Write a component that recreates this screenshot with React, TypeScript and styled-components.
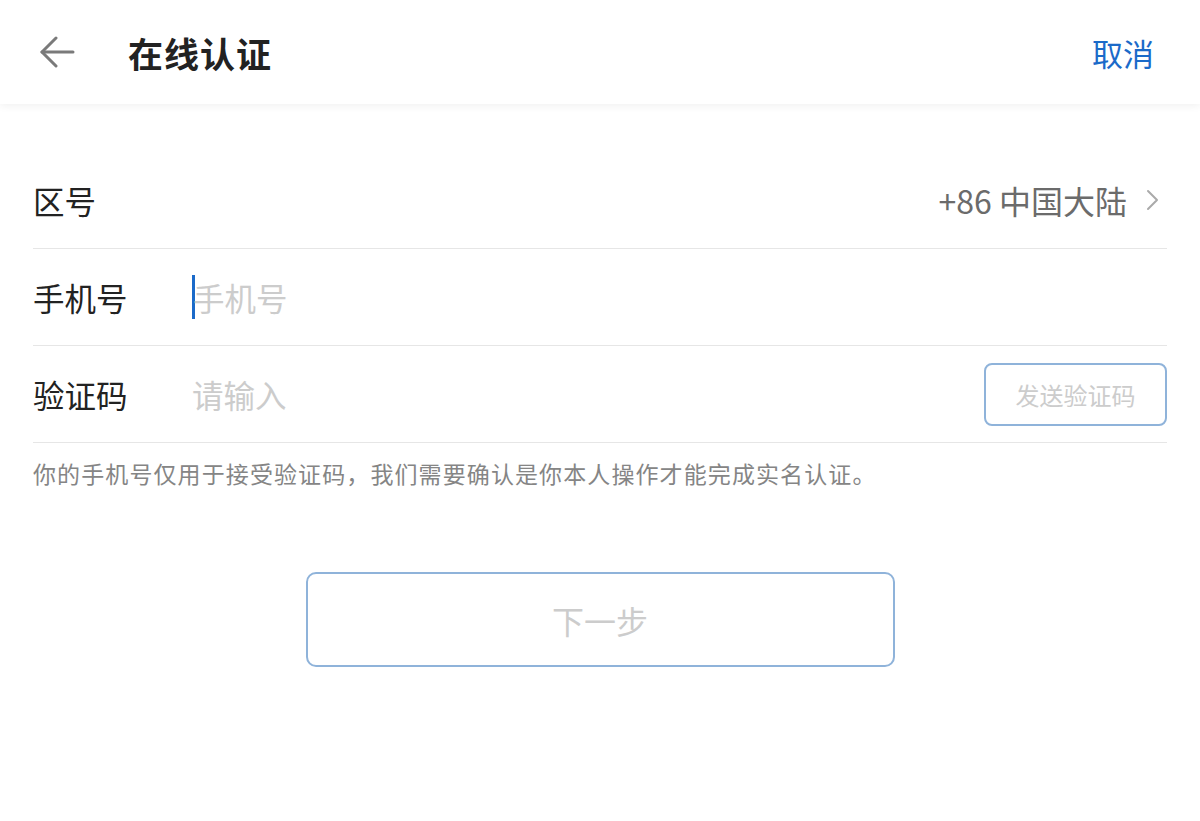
import styled, { createGlobalStyle } from "styled-components";

const GlobalStyle = createGlobalStyle`
  html, body {
    margin: 0;
    padding: 0;
    background: #ffffff;
    font-family: "Noto Sans CJK SC", "Noto Sans", sans-serif;
  }
`;

const Page = styled.div`
  width: 1200px;
  height: 821px;
  background: #ffffff;
  overflow: hidden;
`;

const Header = styled.header`
  height: 104px;
  display: flex;
  align-items: center;
  padding: 0 46px 0 38px;
  box-shadow: 0 2px 8px rgba(0, 0, 0, 0.06);
  position: relative;
`;

const BackButton = styled.button`
  width: 38px;
  height: 38px;
  padding: 0;
  border: none;
  background: none;
  display: flex;
  align-items: center;
  justify-content: center;
  margin-right: 52px;
`;

const Title = styled.h1`
  margin: 0;
  flex: 1;
  font-size: 35px;
  font-weight: 700;
  color: #222222;
  letter-spacing: 1px;
`;

const Cancel = styled.span`
  font-size: 31px;
  color: #1b6ac9;
`;

const Form = styled.main`
  padding: 48px 33px 0;
`;

const Row = styled.div`
  height: 96px;
  display: flex;
  align-items: center;
  border-bottom: 1px solid #e6e6e6;
`;

const Label = styled.span`
  width: 159px;
  font-size: 31.5px;
  color: #222222;
`;

const Value = styled.span`
  margin-left: auto;
  margin-right: 8px;
  display: flex;
  align-items: center;
  gap: 18px;
  font-size: 32px;
  color: #6b6b6b;
`;

const InputArea = styled.div`
  flex: 1;
  display: flex;
  align-items: center;
  font-size: 31.5px;
  color: #cccccc;
`;

const Caret = styled.span`
  width: 3px;
  height: 44px;
  background: #1b6ac9;
  margin-right: -2px;
`;

const SendButton = styled.button`
  width: 183px;
  height: 63px;
  border: 2px solid #8fb3da;
  border-radius: 8px;
  background: #ffffff;
  font-family: inherit;
  font-size: 24px;
  color: #cccccc;
  padding: 0;
`;

const Note = styled.p`
  margin: 13px 0 0;
  font-size: 23px;
  letter-spacing: 1.1px;
  color: #858585;
`;

const NextWrap = styled.div`
  display: flex;
  justify-content: center;
  margin-top: 82px;
`;

const NextButton = styled.button`
  width: 589px;
  height: 95px;
  border: 2px solid #8fb3da;
  border-radius: 10px;
  background: #ffffff;
  font-family: inherit;
  font-size: 32px;
  color: #cccccc;
`;

export default function App() {
  return (
    <Page>
      <GlobalStyle />
      <Header>
        <BackButton aria-label="返回">
          <svg width="36" height="32" viewBox="0 0 36 32" fill="none" stroke="#7a7a7a" strokeWidth="3" strokeLinecap="round" strokeLinejoin="round">
            <path d="M34 16H3" />
            <path d="M17 2L3 16l14 14" />
          </svg>
        </BackButton>
        <Title>在线认证</Title>
        <Cancel>取消</Cancel>
      </Header>
      <Form>
        <Row>
          <Label>区号</Label>
          <Value>
            +86 中国大陆
            <svg width="14" height="24" viewBox="0 0 14 24" fill="none" stroke="#aaaaaa" strokeWidth="2" strokeLinecap="round" strokeLinejoin="round">
              <path d="M3 3l9 9-9 9" />
            </svg>
          </Value>
        </Row>
        <Row>
          <Label>手机号</Label>
          <InputArea>
            <Caret />
            手机号
          </InputArea>
        </Row>
        <Row>
          <Label>验证码</Label>
          <InputArea>请输入</InputArea>
          <SendButton>发送验证码</SendButton>
        </Row>
        <Note>你的手机号仅用于接受验证码，我们需要确认是你本人操作才能完成实名认证。</Note>
        <NextWrap>
          <NextButton>下一步</NextButton>
        </NextWrap>
      </Form>
    </Page>
  );
}
